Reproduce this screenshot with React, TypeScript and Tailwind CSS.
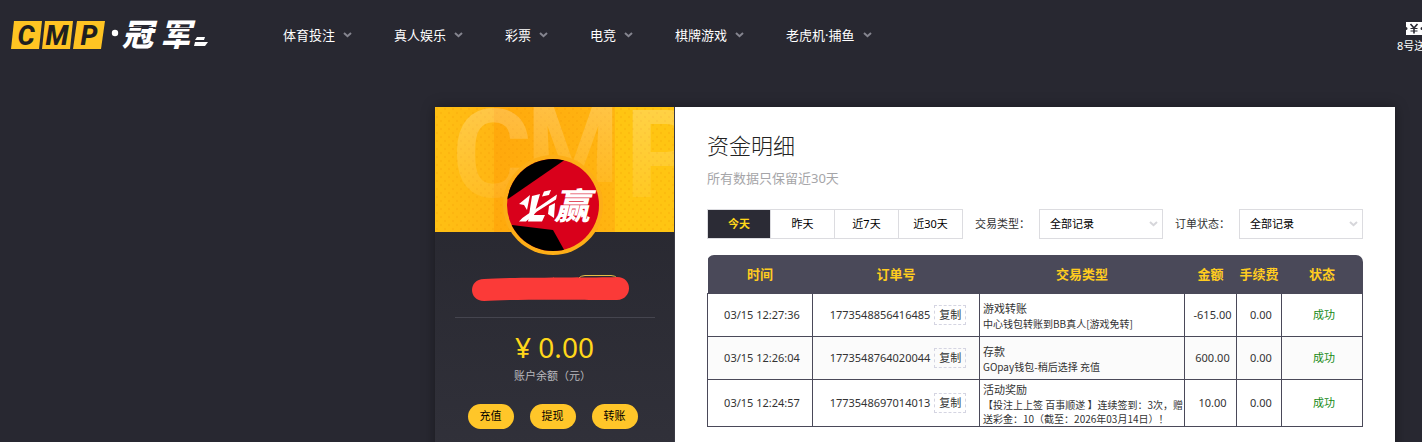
import React from 'react';
import clsx from 'clsx';

const navItems = ['体育投注', '真人娱乐', '彩票', '电竞', '棋牌游戏', '老虎机·捕鱼'];

const ranges = ['今天', '昨天', '近7天', '近30天'];

const actions = ['充值', '提现', '转账'];

interface RecordItem {
	time: string;
	order: string;
	title: string;
	detail: string[];
	amount: string;
	fee: string;
	status: string;
}

const records: RecordItem[] = [
	{
		time: '03/15 12:27:36',
		order: '1773548856416485',
		title: '游戏转账',
		detail: ['中心钱包转账到BB真人[游戏免转]'],
		amount: '-615.00',
		fee: '0.00',
		status: '成功',
	},
	{
		time: '03/15 12:26:04',
		order: '1773548764020044',
		title: '存款',
		detail: ['GOpay钱包-稍后选择 充值'],
		amount: '600.00',
		fee: '0.00',
		status: '成功',
	},
	{
		time: '03/15 12:24:57',
		order: '1773548697014013',
		title: '活动奖励',
		detail: ['【投注上上签 百事顺遂 】连续签到：3次，赠', '送彩金：10（截至：2026年03月14日）！'],
		amount: '10.00',
		fee: '0.00',
		status: '成功',
	},
];

const Chevron = ({ className }: { className?: string }) => (
	<svg viewBox="0 0 9 6" className={clsx('h-[6px] w-[9px]', className)} fill="none" aria-hidden="true">
		<path d="M1 1l3.5 3.2L8 1" stroke="currentColor" strokeWidth="2" />
	</svg>
);

const Logo = () => (
	<svg viewBox="0 0 200 32" className="h-8 w-[200px] overflow-visible" role="img" aria-label="CMP 冠军">
		<g fill="#ffc423">
			<path d="M4 2h28l-3 28H1z" />
			<path d="M35 2h28l-3 28H32z" />
			<path d="M67 2h28l-4 28H63z" />
		</g>
		<g
			fill="#1f1f20"
			fontFamily="Roboto, sans-serif"
			fontWeight="800"
			fontStyle="italic"
			fontSize="27"
			textAnchor="middle"
		>
			<text x="16" y="26">C</text>
			<text x="47" y="26">M</text>
			<text x="79" y="26">P</text>
		</g>
		<circle cx="105" cy="14" r="3.2" fill="#fff" />
		<g
			fill="#fff"
			fontFamily="'Noto Sans CJK SC', sans-serif"
			fontWeight="900"
			fontStyle="italic"
			fontSize="31"
		>
			<text x="112" y="27">冠</text>
			<text x="150" y="27">军</text>
		</g>
		<g stroke="#282831" strokeWidth="1">
			<path d="M113 8.5h32M150 9.500h34M149 19.5h36" />
		</g>
		<g fill="#fff">
			<path d="M187 18h8l-1 3h-9z" />
			<path d="M185 23h13l-3 4h-11z" />
		</g>
	</svg>
);

const Banner = () => (
	<svg viewBox="0 0 239 125" className="h-[125px] w-full" preserveAspectRatio="xMidYMin slice" aria-hidden="true">
		<defs>
			<linearGradient id="left" x1="0" x2="1">
				<stop offset="0" stopColor="#ffc013" />
				<stop offset="1" stopColor="#ffb613" />
			</linearGradient>
			<linearGradient id="middle" x1="0" x2="1">
				<stop offset="0" stopColor="#ffa90c" />
				<stop offset="1" stopColor="#ffb511" />
			</linearGradient>
			<linearGradient id="ghost" x1="0" x2="0" y1="0" y2="1">
				<stop offset="0" stopColor="#fff" stopOpacity="0.26" />
				<stop offset="1" stopColor="#fff" stopOpacity="0.02" />
			</linearGradient>
			<pattern id="dots" width="8" height="8" patternUnits="userSpaceOnUse">
				<circle cx="2" cy="2" r="1.2" fill="#f08c00" fillOpacity="0.16" />
				<circle cx="6" cy="6" r="1.2" fill="#f08c00" fillOpacity="0.16" />
			</pattern>
		</defs>
		<rect width="59" height="125" fill="url(#left)" />
		<rect x="59" width="121" height="125" fill="url(#middle)" />
		<rect x="180" width="59" height="125" fill="#ffc512" />
		<rect width="239" height="125" fill="url(#dots)" />
		<g fill="url(#ghost)" fontFamily="Roboto, sans-serif" fontWeight="700">
			<text x="17" y="90" fontSize="122">C</text>
			<text x="92" y="75" fontSize="105">M</text>
			<text x="190" y="90" fontSize="122">P</text>
		</g>
	</svg>
);

const Avatar = () => (
	<svg viewBox="0 0 100 100" className="h-[100px] w-[100px]" role="img" aria-label="必赢">
		<defs>
			<clipPath id="face">
				<circle cx="50" cy="50" r="46" />
			</clipPath>
		</defs>
		<circle cx="50" cy="50" r="50" fill="#fdae17" />
		<g clipPath="url(#face)">
			<rect width="100" height="100" fill="#d9001b" />
			<path d="M0 47L5 44L63 4V0H0z" fill="#000" />
			<path d="M0 69L50 75L64 100H0z" fill="#000" />
		</g>
		<g fill="#fff">
			<path d="M16 49l11-9-3 15-3-5z" />
			<path d="M29 41l8-2-6 21h11l-3 6.500H25z" />
			<path d="M54 39.500l-1 5-19 12-11 10h-7c4-5 10-8 16-12z" />
			<path d="M41 36.500l7-1.500-2 5-7 1.500z" />
			<path d="M46 51l6-3-1 15-6-4z" />
		</g>
		<text
			x="51"
			y="64"
			fill="#fff"
			fontFamily="'Noto Sans CJK SC', sans-serif"
			fontWeight="900"
			fontStyle="italic"
			fontSize="36"
		>
			赢
		</text>
	</svg>
);

const Header = () => (
	<header className="flex h-[70px] items-center overflow-hidden pl-[10px]">
		<a href="#" className="mr-[73px] shrink-0">
			<Logo />
		</a>
		<nav className="flex grow gap-[42px] whitespace-nowrap">
			{navItems.map((item) => (
				<a key={item} href="#" className="flex items-center gap-2 text-[13px] leading-5 text-white">
					{item}
					<Chevron className="text-[#85858f]" />
				</a>
			))}
		</nav>
		<a href="#" className="w-[25px] shrink-0 overflow-hidden pt-1 text-[11px] leading-4 whitespace-nowrap text-white">
			<svg viewBox="0 0 25 15" className="mb-[2px] h-[15px] w-[25px]" aria-hidden="true">
				<path d="M9 1h16v5a1.500 1.500 0 000 3v5H9V9a1.500 1.500 0 000-3z" fill="#fff" />
				<path d="M13.500 3L17 7l3.500-4M17 7v5.500" stroke="#282831" strokeWidth="1.600" fill="none" />
				<path d="M13.500 7.500h7M13.500 10h7" stroke="#282831" fill="none" />
			</svg>
			8号送
		</a>
	</header>
);

const Sidebar = () => (
	<aside className="flex w-60 shrink-0 flex-col items-center border-r border-[#3a3a44] bg-linear-to-b from-[#25252d] to-[#31313a]">
		<Banner />
		<div className="-mt-[77px] pr-1">
			<Avatar />
		</div>
		<div className="mt-[19px] pr-2">
			<svg viewBox="0 0 160 28" className="h-7 w-40" aria-hidden="true">
				<rect x="105" y="1.500" width="44" height="18" rx="9" fill="none" stroke="#e5bd45" />
				<path
					d="M13 5C40 3 120 4 146 3C162 3 162 25 146 26C120 26 40 25 13 27C-3 27-3 5 13 5z"
					fill="#fb3a38"
				/>
			</svg>
		</div>
		<hr className="mt-[15px] w-[200px] border-[#45454f]" />
		<p className="mt-[11px] text-[28px] leading-9 text-[#ffd71a]">¥ 0.00</p>
		<p className="mt-[3px] pr-1 text-[11px] leading-4 text-[#b9b9bd]">账户余额（元）</p>
		<div className="mt-5 mb-8 flex gap-4 pr-1">
			{actions.map((action) => (
				<button key={action} className="h-[25px] w-[46px] rounded-full bg-[#ffc629] text-[11px] text-black">
					{action}
				</button>
			))}
		</div>
	</aside>
);

const SelectField = ({ id, label }: { id: string; label: string }) => (
	<div className="flex items-center">
		<label htmlFor={id} className="w-16 text-[11px] text-[#333]">
			{label}
		</label>
		<div className="relative">
			<select
				id={id}
				className="h-[30px] w-[124px] appearance-none border border-[#dcdce0] bg-white pl-[10px] text-[11px] text-black"
			>
				<option>全部记录</option>
			</select>
			<Chevron className="pointer-events-none absolute top-3 right-[5px] text-[#d6d6da]" />
		</div>
	</div>
);

const Filters = () => (
	<div className="mt-[21px] flex items-center justify-between whitespace-nowrap">
		<div className="flex border border-[#dcdce0]">
			{ranges.map((range, index) => (
				<button
					key={range}
					className={clsx(
						'h-7 text-[11px]',
						index === 0
							? 'w-[62px] bg-[#2b2b35] font-bold text-[#ffd71a]'
							: 'w-16 border-l border-[#dcdce0] text-black'
					)}
				>
					{range}
				</button>
			))}
		</div>
		<SelectField id="type" label="交易类型：" />
		<SelectField id="status" label="订单状态：" />
	</div>
);

const RecordTable = () => (
	<div className="mt-4 overflow-hidden rounded-t-[7px]">
		<table className="w-full table-fixed border-collapse text-[11px] leading-4 text-[#333]">
			<colgroup>
				<col className="w-[105px]" />
				<col className="w-[167px]" />
				<col />
				<col className="w-[52px]" />
				<col className="w-[45px]" />
				<col className="w-[81px]" />
			</colgroup>
			<thead>
				<tr className="h-[38px] bg-[#4a4959] text-[13px] text-[#ffcc1f]">
					<th>时间</th>
					<th>订单号</th>
					<th>交易类型</th>
					<th>金额</th>
					<th>手续费</th>
					<th>状态</th>
				</tr>
			</thead>
			<tbody className="[&_td]:border [&_td]:border-[#4a4959]">
				{records.map((record) => (
					<tr key={record.order} className="h-[43px] text-center even:bg-[#fbfbfb]">
						<td className="pl-1">{record.time}</td>
						<td className="pl-1 whitespace-nowrap">
							{record.order}
							<button className="ml-1 h-5 w-8 border border-dashed border-[#d5d5e2] leading-4">
								复制
							</button>
						</td>
						<td className="pl-[3px] text-left font-['Noto_Sans_CJK_SC',sans-serif] whitespace-nowrap">
							<p className="leading-[18px]">{record.title}</p>
							{record.detail.map((line) => (
								<p key={line} className="text-[10px] leading-[14px]">
									{line}
								</p>
							))}
						</td>
						<td className="pl-1">{record.amount}</td>
						<td className="pl-1">{record.fee}</td>
						<td className="pl-1 text-[#168a16]">{record.status}</td>
					</tr>
				))}
			</tbody>
		</table>
	</div>
);

const App = () => {
	return (
		<div className="min-h-screen bg-[#282831] font-['Noto_Sans','Noto_Sans_CJK_SC',sans-serif]">
			<Header />
			<div className="pt-[37px] pr-[27px] pl-[435px]">
				<div className="flex shadow-[0_0_12px_rgba(0,0,0,0.35)]">
					<Sidebar />
					<main className="min-w-0 grow bg-white px-8 pt-6">
						<h1 className="text-[22px] leading-7 font-light text-[#222]">资金明细</h1>
						<p className="mt-[9px] text-[13px] leading-5 text-[#a5a5a8]">所有数据只保留近30天</p>
						<Filters />
						<RecordTable />
					</main>
				</div>
			</div>
		</div>
	);
};

export default App;
